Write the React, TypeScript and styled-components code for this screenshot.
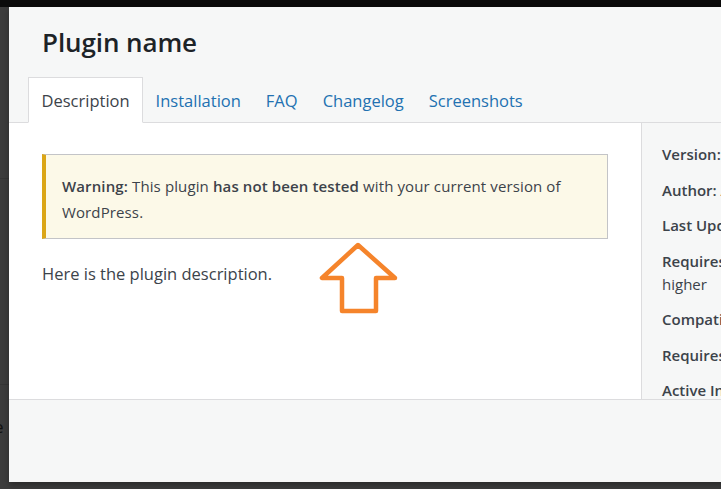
import React from "react";
import styled, { createGlobalStyle } from "styled-components";

const Global = createGlobalStyle`
  html, body { margin: 0; padding: 0; }
  body {
    background: #3c3c3c;
    font-family: "Open Sans", "Noto Sans", sans-serif;
    overflow: hidden;
    width: 721px;
    height: 489px;
  }
`;

const Page = styled.div`
  position: relative;
  width: 721px;
  height: 489px;
  background: #3c3c3c;
  overflow: hidden;
`;

const TopBar = styled.div`
  height: 7px;
  background: #0b0b0b;
`;

const PageLine = styled.div<{ $top: number }>`
  height: 1px;
  margin-top: ${(p) => p.$top}px;
  background: #353535;
`;

const PeekText = styled.div`
  margin-top: 30px;
  margin-left: -6px;
  font-size: 17px;
  color: #111;
`;

const Modal = styled.div`
  position: absolute;
  top: 7px;
  left: 9px;
  width: 900px;
  height: 475px;
  background: #f6f7f7;
  display: flex;
  flex-direction: column;
  box-shadow: 0 3px 6px rgba(0, 0, 0, 0.3);
`;

const Header = styled.div`
  display: flex;
  flex-direction: column;
  border-bottom: 1px solid #dcdcde;
`;

const Title = styled.h1`
  margin: 0;
  padding: 18px 0 0 33px;
  height: 52px;
  font-size: 26px;
  font-weight: 600;
  line-height: 34px;
  color: #1d2327;
  letter-spacing: -0.1px;
`;

const Tabs = styled.nav`
  display: flex;
  padding-left: 19px;
  margin-bottom: -1px;
`;

const Tab = styled.a<{ $active?: boolean }>`
  display: block;
  height: 44px;
  padding: 0 ${(p) => (p.$active ? 12.5 : 11.5)}px;
  border: 1px solid ${(p) => (p.$active ? "#dcdcde" : "transparent")};
  border-bottom: 1px solid ${(p) => (p.$active ? "#fff" : "transparent")};
  background: ${(p) => (p.$active ? "#fff" : "transparent")};
  color: ${(p) => (p.$active ? "#3c434a" : "#2271b1")};
  font-size: 16.5px;
  line-height: 45px;
  text-decoration: none;
  white-space: nowrap;
`;

const Body = styled.div`
  display: flex;
  height: 276px;
  border-bottom: 1px solid #dcdcde;
`;

const Main = styled.div`
  width: 599px;
  background: #fff;
  padding: 31px 0 0 33px;
  position: relative;
`;

const Notice = styled.div`
  width: 566px;
  height: 85px;
  box-sizing: border-box;
  border: 1px solid #c3c4c7;
  border-left: 4px solid #dba617;
  background: #fcf9e8;
  padding: 18px 16px 0 16px;
  font-size: 15px;
  letter-spacing: 0.12px;
  line-height: 26px;
  color: #3c434a;
  p { margin: 0; }
  strong { font-weight: 600; }
`;

const Description = styled.p`
  margin: 21px 0 0;
  font-size: 16.5px;
  line-height: 28px;
  color: #3c434a;
`;

const Arrow = styled.svg`
  position: absolute;
  left: 291px;
  top: 107px;
`;

const Sidebar = styled.aside`
  flex: 1;
  border-left: 1px solid #dcdcde;
  background: #f6f7f7;
  padding: 20px 0 0 20px;
  overflow: hidden;
`;

const Meta = styled.ul`
  list-style: none;
  margin: 0;
  padding: 0;
`;

const MetaItem = styled.li`
  margin: 0 0 12.5px;
  font-size: 15px;
  line-height: 23px;
  color: #3c434a;
  width: 262px;
  strong { font-weight: 600; }
`;

const Footer = styled.div`
  flex: 1;
  background: #f6f7f7;
`;

export default function App() {
  return (
    <>
      <Global />
      <Page>
        <TopBar />
        <PageLine $top={171} />
        <PageLine $top={205} />
        <PeekText>e</PeekText>
        <Modal>
          <Header>
            <Title>Plugin name</Title>
            <Tabs>
              <Tab $active href="#">Description</Tab>
              <Tab href="#">Installation</Tab>
              <Tab href="#">FAQ</Tab>
              <Tab href="#">Changelog</Tab>
              <Tab href="#">Screenshots</Tab>
            </Tabs>
          </Header>
          <Body>
            <Main>
              <Notice>
                <p>
                  <strong>Warning:</strong> This plugin <strong>has not been tested</strong> with your
                  current version of WordPress.
                </p>
              </Notice>
              <Description>Here is the plugin description.</Description>
              <Arrow width="110" height="90" viewBox="0 0 110 90">
                <path
                  d="M58 15 L22 48 L42 48 L42 81 L76 81 L76 48 L95 48 Z"
                  fill="none"
                  stroke="#f5842b"
                  strokeWidth="4.5"
                  strokeLinejoin="round"
                />
              </Arrow>
            </Main>
            <Sidebar>
              <Meta>
                <MetaItem><strong>Version:</strong> 1.0</MetaItem>
                <MetaItem><strong>Author:</strong> Author</MetaItem>
                <MetaItem><strong>Last Updated:</strong> 1 day ago</MetaItem>
                <MetaItem><strong>Requires WordPress Version:</strong> 5.0 or higher</MetaItem>
                <MetaItem><strong>Compatible up to:</strong> 5.9</MetaItem>
                <MetaItem><strong>Requires PHP Version:</strong> 7.0</MetaItem>
                <MetaItem><strong>Active Installations:</strong> 100+</MetaItem>
              </Meta>
            </Sidebar>
          </Body>
          <Footer />
        </Modal>
      </Page>
    </>
  );
}
